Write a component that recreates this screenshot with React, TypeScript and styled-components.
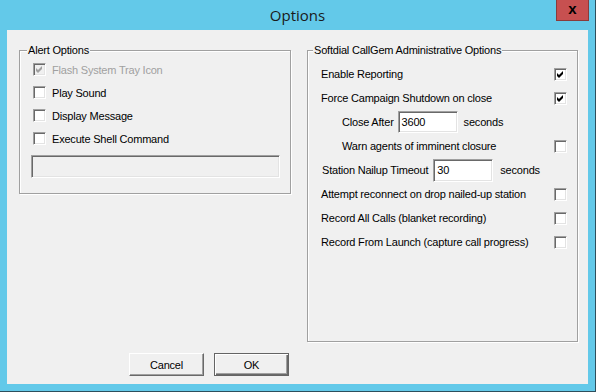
import React from 'react';
import styled, { createGlobalStyle } from 'styled-components';

const GlobalStyle = createGlobalStyle`
  html, body {
    margin: 0;
    padding: 0;
    background: #63c9e9;
  }
  body {
    font-family: "Liberation Sans", Arial, sans-serif;
    font-size: 11px;
    letter-spacing: -0.2px;
    color: #000;
  }
`;

const Window = styled.div`
  width: 596px;
  height: 392px;
  box-sizing: border-box;
  background: #63c9e9;
  border-right: 1px solid #2e4f5c;
  border-bottom: 1px solid #2e4f5c;
  display: flex;
  flex-direction: column;
`;

const TitleBar = styled.div`
  height: 30px;
  display: grid;
  grid-template-columns: 1fr auto 1fr;
  align-items: center;
`;

const Title = styled.span`
  grid-column: 2;
  font-family: "Open Sans", "Liberation Sans", sans-serif;
  font-size: 15px;
  letter-spacing: 0;
  color: #1a1a1a;
  padding-bottom: 1px;
`;

const CloseButton = styled.div`
  grid-column: 3;
  justify-self: end;
  align-self: start;
  margin-right: 6px;
  width: 33px;
  height: 21px;
  box-sizing: border-box;
  background: #c75050;
  border: 1px solid #8a3b3b;
  border-top: none;
  display: flex;
  align-items: center;
  justify-content: center;
  font-family: "Liberation Sans", Arial, sans-serif;
  font-weight: bold;
  font-size: 15px;
  letter-spacing: 0;
  line-height: 1;
  padding-bottom: 3px;
`;

const Client = styled.div`
  flex: 1;
  margin: 0 7px 7px 7px;
  background: #f0f0f0;
  box-sizing: border-box;
  padding: 20px 10px 0 12px;
  display: flex;
  flex-direction: column;
`;

const Panels = styled.div`
  display: flex;
  align-items: flex-start;
  gap: 16px;
`;

const GroupBox = styled.div<{ $w: number; $h: number; $pt: number; $pl: number; $pr: number }>`
  position: relative;
  width: ${p => p.$w}px;
  height: ${p => p.$h}px;
  box-sizing: border-box;
  border: 1px solid #a0a0a0;
  box-shadow: inset 1px 1px 0 #fff, 1px 1px 0 #fff;
  padding: ${p => p.$pt}px ${p => p.$pr}px 0 ${p => p.$pl}px;
  display: flex;
  flex-direction: column;
`;

const Legend = styled.span<{ $left: number }>`
  position: absolute;
  top: -7px;
  left: ${p => p.$left}px;
  padding: 0 1px;
  line-height: 13px;
  background: #f0f0f0;
`;

const CheckRow = styled.label<{ $h: number }>`
  display: flex;
  align-items: center;
  height: ${p => p.$h}px;
  margin-left: 2px;
  gap: 6px;
`;

const Row = styled.div<{ $indent?: number }>`
  display: flex;
  align-items: center;
  height: 24px;
  padding-left: ${p => p.$indent || 0}px;
`;

const SpreadRow = styled(Row)`
  justify-content: space-between;
`;

const Text = styled.span<{ $disabled?: boolean; $ml?: number }>`
  color: ${p => (p.$disabled ? '#a0a0a0' : '#000')};
  margin-left: ${p => p.$ml || 0}px;
  white-space: nowrap;
`;

const Box = styled.span<{ $disabled?: boolean }>`
  width: 13px;
  height: 13px;
  box-sizing: border-box;
  flex: none;
  display: inline-flex;
  background: ${p => (p.$disabled ? '#f0f0f0' : '#fff')};
  border: 1px solid;
  border-color: #a0a0a0 #fff #fff #a0a0a0;
  box-shadow: inset 1px 1px 0 #696969, inset -1px -1px 0 #e3e3e3;
`;

const Field = styled.div<{ $w: number; $h: number; $ml?: number; $disabled?: boolean }>`
  width: ${p => p.$w}px;
  height: ${p => p.$h}px;
  margin-left: ${p => p.$ml || 0}px;
  box-sizing: border-box;
  background: ${p => (p.$disabled ? '#f0f0f0' : '#fff')};
  border: 1px solid;
  border-color: #a0a0a0 #fff #fff #a0a0a0;
  box-shadow: inset 1px 1px 0 #696969, inset -1px -1px 0 #e3e3e3;
  padding: 0 3px;
  display: flex;
  align-items: center;
`;

const ShellField = styled(Field)`
  margin-top: 5px;
`;

const Footer = styled.div`
  display: flex;
  gap: 10px;
  margin: 11px 0 0 110px;
`;

const Button = styled.div<{ $default?: boolean }>`
  width: 75px;
  height: 23px;
  box-sizing: border-box;
  display: flex;
  align-items: center;
  justify-content: center;
  background: #f0f0f0;
  border: 1px solid;
  border-color: ${p => (p.$default ? '#646464' : '#fff #696969 #696969 #fff')};
  box-shadow: ${p =>
    p.$default
      ? 'inset 1px 1px 0 #fff, inset -1px -1px 0 #696969, inset -2px -2px 0 #a0a0a0'
      : 'inset -1px -1px 0 #a0a0a0'};
`;

const Check = ({ checked, disabled }: { checked?: boolean; disabled?: boolean }) => (
  <Box $disabled={disabled}>
    {checked && (
      <svg width="11" height="11" viewBox="0 0 11 11">
        <polygon points="2,4 4,6 8,2 8,5 4,9 2,7" fill={disabled ? '#a0a0a0' : '#000'} />
      </svg>
    )}
  </Box>
);

const alerts = [
  { label: 'Flash System Tray Icon', checked: true, disabled: true },
  { label: 'Play Sound' },
  { label: 'Display Message' },
  { label: 'Execute Shell Command' },
];

const App = () => {
  return (
    <>
      <GlobalStyle />
      <Window>
        <TitleBar>
          <Title>Options</Title>
          <CloseButton>x</CloseButton>
        </TitleBar>
        <Client>
          <Panels>
            <GroupBox $w={272} $h={144} $pt={7} $pl={11} $pr={10}>
              <Legend $left={7}>Alert Options</Legend>
              {alerts.map(a => (
                <CheckRow key={a.label} $h={23}>
                  <Check checked={a.checked} disabled={a.disabled} />
                  <Text $disabled={a.disabled}>{a.label}</Text>
                </CheckRow>
              ))}
              <ShellField $w={249} $h={23} $disabled />
            </GroupBox>

            <GroupBox $w={271} $h={292} $pt={11} $pl={13} $pr={10}>
              <Legend $left={5}>Softdial CallGem Administrative Options</Legend>
              <SpreadRow>
                <Text>Enable Reporting</Text>
                <Check checked />
              </SpreadRow>
              <SpreadRow>
                <Text>Force Campaign Shutdown on close</Text>
                <Check checked />
              </SpreadRow>
              <Row $indent={21}>
                <Text>Close After</Text>
                <Field $w={60} $h={22} $ml={4}>3600</Field>
                <Text $ml={6}>seconds</Text>
              </Row>
              <SpreadRow $indent={21}>
                <Text>Warn agents of imminent closure</Text>
                <Check />
              </SpreadRow>
              <Row $indent={1}>
                <Text>Station Nailup Timeout</Text>
                <Field $w={60} $h={23} $ml={5}>30</Field>
                <Text $ml={7}>seconds</Text>
              </Row>
              <SpreadRow>
                <Text>Attempt reconnect on drop nailed-up station</Text>
                <Check />
              </SpreadRow>
              <SpreadRow>
                <Text>Record All Calls (blanket recording)</Text>
                <Check />
              </SpreadRow>
              <SpreadRow>
                <Text>Record From Launch (capture call progress)</Text>
                <Check />
              </SpreadRow>
            </GroupBox>
          </Panels>
          <Footer>
            <Button>Cancel</Button>
            <Button $default>OK</Button>
          </Footer>
        </Client>
      </Window>
    </>
  );
};

export default App;
